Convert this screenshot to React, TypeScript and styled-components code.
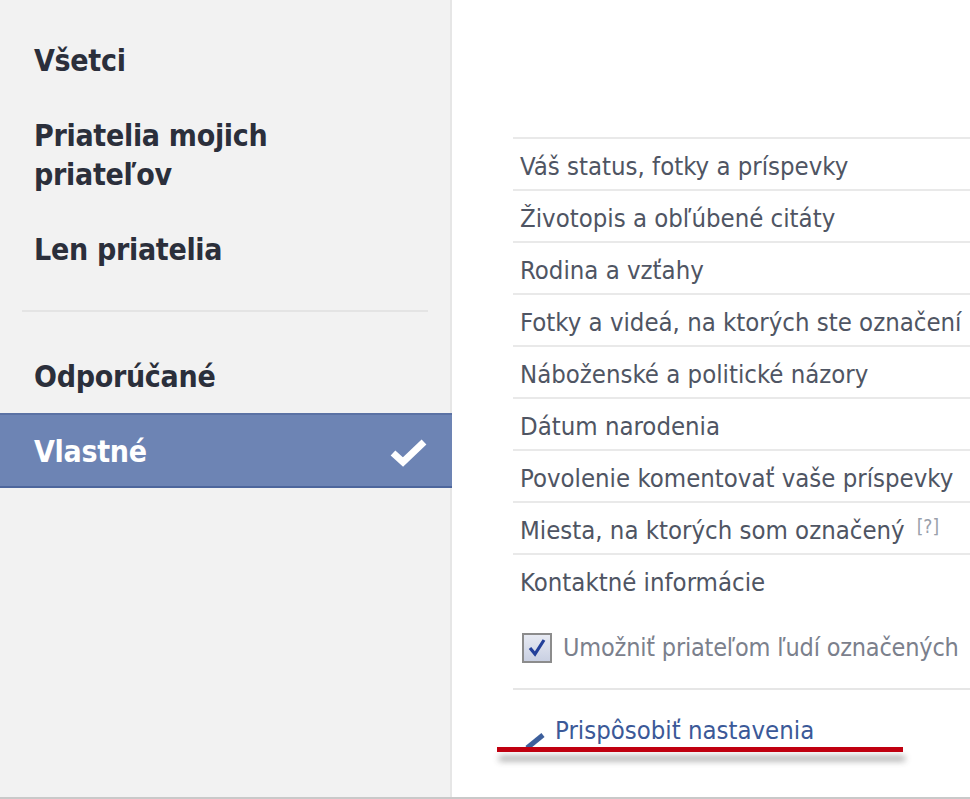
import React from "react";
import styled, { createGlobalStyle } from "styled-components";

const Global = createGlobalStyle`
  html, body { margin: 0; padding: 0; background: #ffffff; overflow: hidden; }
  body { font-family: "DejaVu Sans Condensed", "DejaVu Sans", sans-serif; }
`;

const Page = styled.div`
  display: flex;
  width: 970px;
  height: 797px;
  border-bottom: 2px solid #c9c9c9;
  overflow: hidden;
`;

const Sidebar = styled.nav`
  width: 452px;
  flex: none;
  background: #f2f2f2;
  border-right: 2px solid #e6e6e6;
  padding-top: 23px;
  box-sizing: border-box;
`;

const MenuItem = styled.div<{ $active?: boolean; $pb?: number }>`
  display: flex;
  align-items: center;
  justify-content: space-between;
  padding: ${(p) => (p.$active ? "17px 24px 15px 34px" : `18px 34px ${p.$pb ?? 18}px 34px`)};
  font-family: "DejaVu Sans Condensed", "DejaVu Sans", sans-serif;
  font-weight: bold;
  font-size: 30px;
  line-height: 39px;
  color: ${(p) => (p.$active ? "#ffffff" : "#2b2f3b")};
  background: ${(p) => (p.$active ? "#6d84b4" : "transparent")};
  border-top: ${(p) => (p.$active ? "2px solid #5b72a4" : "none")};
  border-bottom: ${(p) => (p.$active ? "2px solid #4d669c" : "none")};
  margin-right: ${(p) => (p.$active ? "-2px" : "0")};
  letter-spacing: -0.3px;
`;

const Divider = styled.hr`
  border: none;
  border-top: 2px solid #e4e4e4;
  margin: 23px 22px 27px 22px;
`;

const Main = styled.main`
  flex: 1;
  padding: 137px 0 0 61px;
  background: #ffffff;
  box-sizing: border-box;
  min-width: 0;
`;

const Content = styled.div`
  width: 520px;
`;

const List = styled.ul`
  list-style: none;
  margin: 0;
  padding: 0;
`;

const Row = styled.li`
  box-sizing: border-box;
  height: 52px;
  padding-top: 4px;
  border-top: 2px solid #e9e9e9;
  padding-left: 7px;
  display: flex;
  align-items: center;
  font-size: 25.5px;
  color: #4f5563;
  white-space: nowrap;
`;

const Help = styled.span`
  font-size: 19px;
  color: #9aa0ab;
  margin-left: 12px;
  position: relative;
  top: -4px;
`;

const CheckRow = styled.label`
  display: flex;
  align-items: center;
  gap: 11px;
  box-sizing: border-box;
  height: 85px;
  padding: 2px 0 0 9px;
  font-size: 25px;
  letter-spacing: -0.2px;
  color: #7b808c;
  white-space: nowrap;
  border-bottom: 2px solid #e6e6e6;
`;

const Box = styled.span`
  width: 26px;
  height: 26px;
  border: 2px solid #8c8c8c;
  background: linear-gradient(#e7eaf3, #c9d0e2);
  display: flex;
  align-items: center;
  justify-content: center;
  flex: none;
`;

const LinkRow = styled.div`
  position: relative;
  display: flex;
  align-items: center;
  height: 80px;
  padding-left: 42px;
`;

const Link = styled.a`
  font-size: 25.5px;
  color: #3b5998;
  text-decoration: none;
  white-space: nowrap;
`;

const Pencil = styled.svg`
  position: absolute;
  left: 12px;
  top: 42px;
`;

const RedLine = styled.div`
  position: absolute;
  left: -16px;
  top: 57px;
  width: 406px;
  height: 5px;
  background: #c00010;
  box-shadow: 2px 9px 6px rgba(60, 60, 60, 0.45);
`;

const items = [
  "Váš status, fotky a príspevky",
  "Životopis a obľúbené citáty",
  "Rodina a vzťahy",
  "Fotky a videá, na ktorých ste označení",
  "Náboženské a politické názory",
  "Dátum narodenia",
  "Povolenie komentovať vaše príspevky",
];

export default function App() {
  return (
    <>
      <Global />
      <Page>
        <Sidebar>
          <MenuItem>Všetci</MenuItem>
          <MenuItem>
            Priatelia mojich
            <br />
            priateľov
          </MenuItem>
          <MenuItem>Len priatelia</MenuItem>
          <Divider />
          <MenuItem $pb={17}>Odporúčané</MenuItem>
          <MenuItem $active>
            Vlastné
            <svg width="38" height="30" viewBox="0 0 38 30">
              <path d="M3 16 L13 25 L34 5" fill="none" stroke="#ffffff" strokeWidth="7" strokeLinejoin="miter" />
            </svg>
          </MenuItem>
        </Sidebar>
        <Main>
          <Content>
            <List>
              {items.map((t) => (
                <Row key={t}>{t}</Row>
              ))}
              <Row>
                Miesta, na ktorých som označený<Help>[?]</Help>
              </Row>
              <Row>Kontaktné informácie</Row>
            </List>
            <CheckRow>
              <Box>
                <svg width="20" height="20" viewBox="0 0 20 20">
                  <path d="M3 10 L8 16 L17 2" fill="none" stroke="#23409a" strokeWidth="3.2" />
                </svg>
              </Box>
              Umožniť priateľom ľudí označených
            </CheckRow>
            <LinkRow>
              <Pencil width="22" height="18" viewBox="0 0 22 18">
                <path d="M2 16 L18 3" stroke="#3d5f9c" strokeWidth="5" />
              </Pencil>
              <Link href="#">Prispôsobiť nastavenia</Link>
              <RedLine />
            </LinkRow>
          </Content>
        </Main>
      </Page>
    </>
  );
}
